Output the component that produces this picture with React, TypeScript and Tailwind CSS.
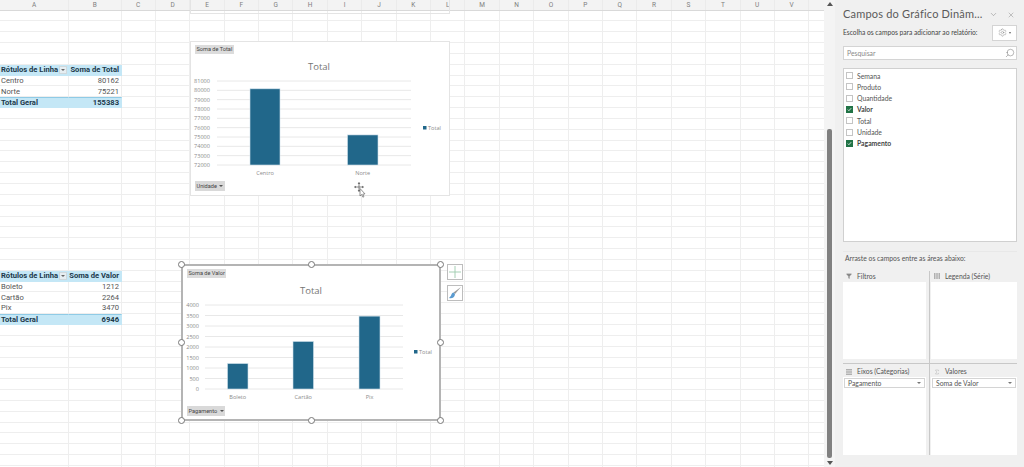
import { ChevronDown, Filter, Search, Settings, Sigma, X } from "lucide-react";

const COLUMNS = "ABCDEFGHIJKLMNOPQRSTUV".split("");
const ROW_COUNT = 43;

type PivotRow = { label: string; value: string; kind: "head" | "body" | "total" };

const totalPivot: PivotRow[] = [
    { label: "Rótulos de Linha", value: "Soma de Total", kind: "head" },
    { label: "Centro", value: "80162", kind: "body" },
    { label: "Norte", value: "75221", kind: "body" },
    { label: "Total Geral", value: "155383", kind: "total" },
];

const valorPivot: PivotRow[] = [
    { label: "Rótulos de Linha", value: "Soma de Valor", kind: "head" },
    { label: "Boleto", value: "1212", kind: "body" },
    { label: "Cartão", value: "2264", kind: "body" },
    { label: "Pix", value: "3470", kind: "body" },
    { label: "Total Geral", value: "6946", kind: "total" },
];

const fields = [
    { name: "Semana", on: false },
    { name: "Produto", on: false },
    { name: "Quantidade", on: false },
    { name: "Valor", on: true },
    { name: "Total", on: false },
    { name: "Unidade", on: false },
    { name: "Pagamento", on: true },
];

function pivotCell(rowIndex: number, start: number, rows: PivotRow[]) {
    const offset = rowIndex - start;
    return offset >= 0 && offset < rows.length ? rows[offset] : null;
}

function SheetRow({ rowIndex }: { rowIndex: number }) {
    const row = pivotCell(rowIndex, 5, totalPivot) ?? pivotCell(rowIndex, 24, valorPivot);
    const filled = row && row.kind !== "body";
    const tone = filled
        ? "bg-[#c4e7f6] font-bold text-[#20384a] border-[#c4e7f6]"
        : "border-[#eeeeee] text-[#555]";
    const topEdge = row?.kind === "total" ? "border-t border-t-[#8fcbe6]" : "";

    return (
        <div className="grid grid-cols-[69px_52.5px_repeat(21,34.4px)_1fr] h-[10.85px]">
            <div className={`relative flex items-center pl-[1px] border-b border-r leading-none whitespace-nowrap ${tone} ${topEdge}`}>
                {row?.label}
                {row?.kind === "head" && (
                    <span className="absolute right-[1px] top-[1.5px] w-[8px] h-[8px] bg-[#e6eef2] border border-[#cfd8dc] flex items-center justify-center">
                        <span className="border-x-[2px] border-x-transparent border-t-[2px] border-t-[#666]" />
                    </span>
                )}
            </div>
            <div className={`flex items-center justify-end pr-[1.5px] border-b border-r leading-none whitespace-nowrap ${tone} ${topEdge}`}>
                {row?.value}
            </div>
            {Array.from({ length: 22 }, (_, i) => (
                <div key={i} className="border-b border-r border-[#eeeeee]" />
            ))}
        </div>
    );
}

type Bar = { label: string; value: number; x: number; width: number };

type ChartProps = {
    axis: string[];
    min: number;
    max: number;
    gridFrom: number;
    labelEnd: number;
    bars: Bar[];
    legendX: number;
    titleX: number;
    selected?: boolean;
    position: string;
    seriesLabel: string;
    fieldLabel: string;
};

function Chart({ axis, min, max, gridFrom, labelEnd, bars, legendX, titleX, selected, position, seriesLabel, fieldLabel }: ChartProps) {
    const top = 40;
    const bottom = 124;
    const step = (bottom - top) / (axis.length - 1);

    return (
        <div className={`absolute bg-white ${position} ${selected ? "border-2 border-[#b4b4b4]" : "border border-[#e4e4e4]"}`}>
            <svg className="absolute left-[-1px] top-[-1px] w-full h-full overflow-visible" style={{ fontFamily: "'Open Sans', sans-serif" }}>
                <text x={titleX} y={29} textAnchor="middle" fontSize="9.5" fill="#757575">Total</text>
                {axis.map((label, i) => (
                    <g key={label}>
                        <line x1={gridFrom} x2={221} y1={top + i * step} y2={top + i * step} stroke="#e8e8e8" strokeWidth="1" />
                        <text x={labelEnd} y={top + i * step + 2} textAnchor="end" fontSize="5.600" fill="#8c8c8c">{label}</text>
                    </g>
                ))}
                {bars.map((bar) => {
                    const y = bottom - ((bar.value - min) / (max - min)) * (bottom - top);
                    return (
                        <g key={bar.label}>
                            <rect x={bar.x} y={y} width={bar.width} height={bottom - y} fill="#21678a" stroke="#cfe2ec" strokeWidth="0.6" />
                            <text x={bar.x + bar.width / 2} y={134} textAnchor="middle" fontSize="5.600" fill="#8c8c8c">{bar.label}</text>
                        </g>
                    );
                })}
                <rect x={legendX} y={85} width={3.5} height={3.5} fill="#21678a" />
                <text x={legendX + 5} y={89} fontSize="5.600" fill="#8c8c8c">Total</text>
            </svg>
            <div className="absolute left-[4px] top-[3px] h-[9px] px-[1.5px] bg-[#dcdcdc] text-[5.6px] leading-[9px] text-[#444] whitespace-nowrap">
                {seriesLabel}
            </div>
            <div className={`absolute left-[4px] h-[10px] px-[1.5px] bg-[#d9d9d9] text-[5.6px] leading-[10px] text-[#444] whitespace-nowrap flex items-center gap-[2.5px] ${selected ? "bottom-[3px]" : "bottom-[4px]"}`}>
                {fieldLabel}
                <span className="border-x-[2px] border-x-transparent border-t-[2.5px] border-t-[#555]" />
            </div>
            {selected && <Handles />}
        </div>
    );
}

function Handles() {
    const spots = [
        "left-[-5px] top-[-5px]",
        "left-[calc(50%-3.5px)] top-[-5px]",
        "right-[-5px] top-[-5px]",
        "left-[-5px] top-[calc(50%-3.5px)]",
        "right-[-5px] top-[calc(50%-3.5px)]",
        "left-[-5px] bottom-[-5px]",
        "left-[calc(50%-3.5px)] bottom-[-5px]",
        "right-[-5px] bottom-[-5px]",
    ];
    return (
        <>
            {spots.map((spot) => (
                <span key={spot} className={`absolute w-[7px] h-[7px] rounded-full bg-white border-[1.2px] border-[#777] ${spot}`} />
            ))}
        </>
    );
}

function MoveCursor() {
    return (
        <svg className="absolute left-[354px] top-[182px]" width="12" height="16" viewBox="0 0 12 16">
            <path d="M5 1.500v7M1.500 5h7" stroke="#666" strokeWidth="0.800" />
            <path d="M5 0l1.300 1.700H3.700zM5 10l1.300-1.700H3.700zM0 5l1.700-1.300v2.600zM10 5L8.300 3.700v2.600z" fill="#444" />
            <path d="M6 6.500v7.500l1.700-1.500 1.200 2.700 1-.5-1.100-2.600 2.200-.2z" fill="#fff" stroke="#666" strokeWidth="0.700" />
        </svg>
    );
}

function AreaHeader({ icon, text }: { icon: React.ReactNode; text: string }) {
    return (
        <div className="h-[11px] flex items-center gap-[5px] pl-[3px] text-[6.8px] text-[#555] whitespace-nowrap">
            <span className="w-[6px] h-[6px] flex items-center justify-center text-[#8a8a8a]">{icon}</span>
            {text}
        </div>
    );
}

function LinesIcon({ vertical }: { vertical?: boolean }) {
    return (
        <svg width="6" height="6" viewBox="0 0 6 6" fill="#b0b0b0">
            {vertical ? (
                <>
                    <rect x="0" y="0" width="1.500" height="6" />
                    <rect x="2.250" y="0" width="1.500" height="6" />
                    <rect x="4.500" y="0" width="1.500" height="6" />
                </>
            ) : (
                <>
                    <rect x="0" y="0" width="6" height="1.500" />
                    <rect x="0" y="2.250" width="6" height="1.500" />
                    <rect x="0" y="4.500" width="6" height="1.500" />
                </>
            )}
        </svg>
    );
}

function AreaDropdown({ text }: { text: string }) {
    return (
        <div className="mx-[1px] mt-[1px] h-[10px] bg-white border border-[#d4d4d4] flex items-center justify-between px-[3px] text-[6.8px] text-[#555] whitespace-nowrap">
            {text}
            <span className="border-x-[2px] border-x-transparent border-t-[2px] border-t-[#777]" />
        </div>
    );
}

function FieldPanel() {
    return (
        <aside className="flex-1 min-w-0 bg-[#f0f0f0] pl-[8px] pr-[7px] flex flex-col" style={{ fontFamily: "Lato, sans-serif" }}>
            <div className="h-[28px] flex items-center justify-between pt-[1px]">
                <span className="text-[11px] tracking-[0.2px] text-[#5a5a5a] whitespace-nowrap">Campos do Gráfico Dinâm...</span>
                <span className="flex items-center gap-[9px] text-[#666] mr-[2px]">
                    <ChevronDown size={9} strokeWidth={1.1} />
                    <X size={8} strokeWidth={1.1} />
                </span>
            </div>
            <div className="h-[13px] mt-[-2px] flex items-center justify-between">
                <span className="text-[6.7px] text-[#444] whitespace-nowrap">Escolha os campos para adicionar ao relatório:</span>
                <span className="w-[25px] h-[16px] bg-white border border-[#d4d4d4] flex items-center justify-center gap-[2px] text-[#777]">
                    <Settings size={9} strokeWidth={1.1} />
                    <span className="border-x-[1.5px] border-x-transparent border-t-[2px] border-t-[#666]" />
                </span>
            </div>
            <div className="mt-[7px] h-[14px] bg-white border border-[#d4d4d4] flex items-center justify-between pl-[3px] pr-[1px]">
                <span className="text-[6.8px] text-[#8a8a8a]">Pesquisar</span>
                <Search size={10} strokeWidth={1.1} className="text-[#666] -scale-x-100" />
            </div>
            <ul className="mt-[8px] h-[174px] bg-white border border-[#d0d0d0] pt-[1px] flex flex-col">
                {fields.map((field) => (
                    <li key={field.name} className="h-[11.3px] flex items-center gap-[4px] pl-[2px] text-[6.8px] text-[#555]">
                        <span className={`w-[7px] h-[7px] flex items-center justify-center border ${field.on ? "bg-[#217346] border-[#217346]" : "bg-white border-[#c4c4c4]"}`}>
                            {field.on && (
                                <svg width="5" height="5" viewBox="0 0 5 5">
                                    <path d="M0.800 2.600l1.100 1.100L4.200 1.200" fill="none" stroke="#fff" strokeWidth="0.800" />
                                </svg>
                            )}
                        </span>
                        <span className={field.on ? "font-bold text-[#444]" : ""}>{field.name}</span>
                    </li>
                ))}
            </ul>
            <div className="mt-[9px] border-t border-[#e8e8e8] h-[13.5px] flex items-center pl-[2px] text-[6.8px] text-[#555] whitespace-nowrap">
                Arraste os campos entre as áreas abaixo:
            </div>
            <div className="mt-[6px] grid grid-cols-2">
                <div className="pr-[3px] border-r border-[#c8c8c8] pb-[3.5px]">
                    <AreaHeader icon={<Filter size={6} fill="#8a8a8a" strokeWidth={1} />} text="Filtros" />
                    <div className="h-[77.5px] bg-white" />
                </div>
                <div className="pl-[1px] pb-[3.5px]">
                    <AreaHeader icon={<LinesIcon vertical />} text="Legenda (Série)" />
                    <div className="h-[77.5px] bg-white" />
                </div>
            </div>
            <div className="grid grid-cols-2 border-t border-[#c8c8c8]">
                <div className="pr-[3px] border-r border-[#c8c8c8] pt-[2.5px]">
                    <AreaHeader icon={<LinesIcon />} text="Eixos (Categorias)" />
                    <div className="h-[78px] bg-white flow-root">
                        <AreaDropdown text="Pagamento" />
                    </div>
                </div>
                <div className="pl-[1px] pt-[2.5px]">
                    <AreaHeader icon={<Sigma size={6} strokeWidth={1.2} />} text="Valores" />
                    <div className="h-[78px] bg-white flow-root">
                        <AreaDropdown text="Soma de Valor" />
                    </div>
                </div>
            </div>
        </aside>
    );
}

export default function App() {
    return (
        <div className="flex w-[1024px] h-[467px] overflow-hidden bg-white text-[7.6px]" style={{ fontFamily: "Roboto, sans-serif" }}>
            <main className="relative w-[824px] overflow-hidden">
                <div className="grid grid-cols-[69px_52.5px_repeat(21,34.4px)_1fr] h-[10.5px] bg-[#f3f3f3] border-b border-[#d9d9d9]">
                    {COLUMNS.map((col) => (
                        <div key={col} className="flex items-center justify-center border-r border-[#ebebeb] text-[6.500px] leading-none text-[#808080]">{col}</div>
                    ))}
                    <div />
                </div>
                {Array.from({ length: ROW_COUNT }, (_, i) => (
                    <SheetRow key={i} rowIndex={i} />
                ))}

                {/* bottom edge of the chart scrolled off above */}
                <div className="absolute left-[190px] top-0 w-[260px] h-[14px] border-x border-b border-[#e4e4e4]" />

                <Chart
                    position="left-[190px] top-[41px] w-[260px] h-[155px]"
                    axis={["81000", "80000", "79000", "78000", "77000", "76000", "75000", "74000", "73000", "72000"]}
                    min={72000}
                    max={81000}
                    gridFrom={27}
                    labelEnd={20}
                    titleX={129}
                    legendX={233}
                    bars={[
                        { label: "Centro", value: 80162, x: 60, width: 30 },
                        { label: "Norte", value: 75221, x: 157.5, width: 30.5 },
                    ]}
                    seriesLabel="Soma de Total"
                    fieldLabel="Unidade"
                />
                <MoveCursor />

                <Chart
                    selected
                    position="left-[181px] top-[264px] w-[260px] h-[157px]"
                    axis={["4000", "3500", "3000", "2500", "2000", "1500", "1000", "500", "0"]}
                    min={0}
                    max={4000}
                    gridFrom={23}
                    labelEnd={17}
                    titleX={129}
                    legendX={232}
                    bars={[
                        { label: "Boleto", value: 1212, x: 45.500, width: 20.500 },
                        { label: "Cartão", value: 2264, x: 111, width: 20.500 },
                        { label: "Pix", value: 3470, x: 177, width: 21 },
                    ]}
                    seriesLabel="Soma de Valor"
                    fieldLabel="Pagamento"
                />

                {/* chart side buttons */}
                <div className="absolute left-[447px] top-[264px] flex flex-col gap-[5px]">
                    <button className="w-[16px] h-[16px] bg-white border border-[#bdbdbd] flex items-center justify-center">
                        <svg width="12" height="12" viewBox="0 0 12 12">
                            <path d="M6 0v12M0 6h12" stroke="#9ccbad" strokeWidth="0.900" />
                        </svg>
                    </button>
                    <button className="w-[16px] h-[16px] bg-white border border-[#bdbdbd] flex items-center justify-center">
                        <svg width="14" height="14" viewBox="0 0 14 14">
                            <path d="M13 1L7 8 5.500 6.500z" fill="#9a9a9a" />
                            <path d="M5.500 6.500C3.500 7 3.500 9 2.800 10L1 12c3 .7 5.700-.3 6-4z" fill="#5b9bd0" />
                        </svg>
                    </button>
                </div>
            </main>

            <div className="w-[11px] bg-[#f4f4f4] flex flex-col items-center justify-between py-[2px]">
                <span className="border-x-[3px] border-x-transparent border-b-[4px] border-b-[#555]" />
                <div className="w-[5px] h-[329px] mt-[120px] bg-[#808080] rounded-[2px]" />
                <span className="border-x-[3px] border-x-transparent border-t-[4px] border-t-[#555]" />
            </div>

            <FieldPanel />
        </div>
    );
}
